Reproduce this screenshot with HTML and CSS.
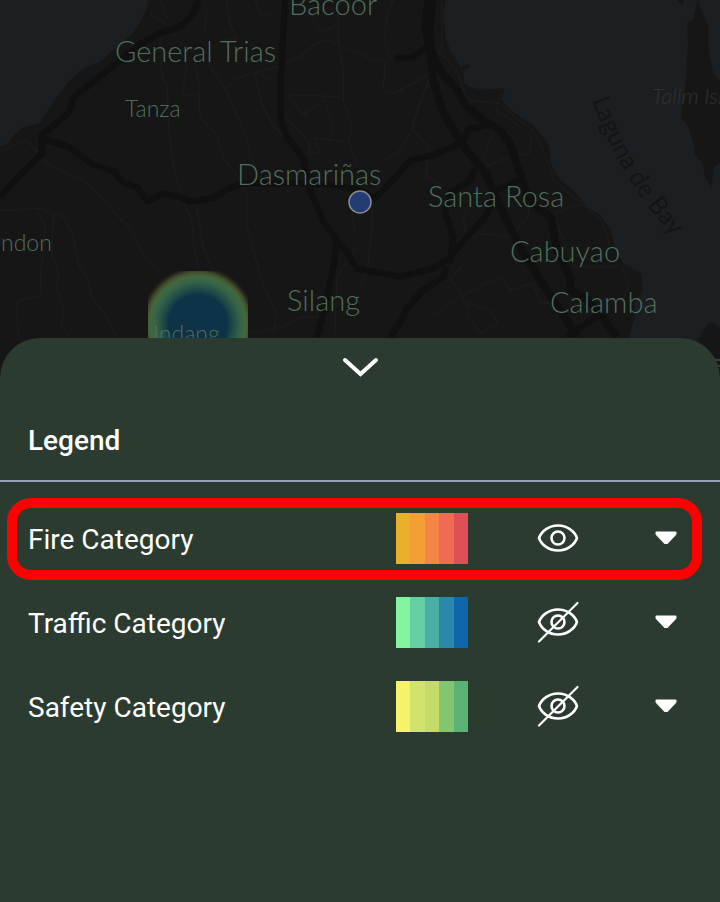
FILE: index.html
```html
<!DOCTYPE html>
<html lang="en">
<head>
<meta charset="utf-8">
<meta name="viewport" content="width=device-width, initial-scale=1">
<title>Map legend</title>
<link rel="stylesheet" href="styles.css">
</head>
<body>
<main class="screen">
  <svg class="map" viewBox="0 0 720 378" preserveAspectRatio="xMidYMin slice" role="img" aria-label="Map of Cavite and Laguna">
    <defs>
      <radialGradient id="heat" gradientUnits="userSpaceOnUse" cx="198" cy="324" r="58">
        <stop offset="0" stop-color="#0e3246"/>
        <stop offset=".5" stop-color="#0e3246"/>
        <stop offset=".6" stop-color="#1f4a49"/>
        <stop offset=".74" stop-color="#376446"/>
        <stop offset=".83" stop-color="#41683f"/>
        <stop offset=".9" stop-color="#4a5530" stop-opacity=".85"/>
        <stop offset="1" stop-color="#332a1a" stop-opacity="0"/>
      </radialGradient>
    </defs>
    <g transform="scale(.333333)">
      <path class="water" d="M0 0H444L438 30 418 72 402 96 370 124 330 158 300 185 258 200 240 214 205 245 180 278 150 322 115 372 68 382 45 402 25 430 0 442Z"/>
      <path class="water" d="M1338 0 1330 40 1336 110 1350 150 1375 190 1390 215 1393 250 1420 264 1450 270 1515 264 1503 296 1530 330 1575 360 1600 375 1630 412 1648 440 1652 490 1680 540 1720 570 1760 620 1800 645 1832 690 1848 750 1868 790 1924 820 1928 870 1905 910 1902 960 1888 1010 1890 1134H2160V0Z"/>
      <path class="land" d="M2092 0 2080 60 2062 66 2064 130 2058 240 2050 300 2042 355 2065 380 2080 430 2086 465 2108 490 2115 530 2134 562 2142 500 2160 490V245L2140 220 2127 160 2125 80 2104 30Z"/>
      <path class="land" d="M2090 1030 2120 975 2140 968 2160 985V1134H2090ZM1384 200 1408 193 1412 200 1390 212ZM2032 0H2050L2048 18Z"/>
    </g>
    <g class="minor" transform="scale(.333333)">
      <path d="M484 110V215L503 270 505 380 520 490 545 590 575 660 582 740 598 820M585 190 597 260 600 350 650 405 672 475 715 535 742 590 740 670 760 750 785 840 830 945 820 1010M624 190 665 250 710 345 745 430 750 475 775 500M0 455 80 420 110 455 145 495 250 540 300 590 405 705 430 770 480 820M560 190 548 285H600M0 632 120 625 190 650 220 710 238 800 262 830 275 890 320 950 350 1010M110 625 135 680 120 850 125 885 50 905 55 1010M160 640 155 760 175 820 170 865 190 930 185 980 210 1010M590 620 610 740 640 820"/>
      <path d="M676 265 710 235 780 214 850 195 900 170 945 130 980 120 1080 158M676 265 720 360M765 220 785 310 815 370 850 410M780 214 800 240 840 240M680 0 690 70 710 120 670 115M765 0 780 45 830 42M930 50 965 95 1010 75M1015 0V130L1030 210V300L1058 380 1045 420 1075 500M860 285 1020 290M865 290 910 345 960 310M850 340 930 430 925 460 960 460 945 415 1040 425M970 295 1000 380 985 435M450 40 510 80 530 120 575 150M480 0 505 60M620 30 615 90"/>
      <path d="M1180 0 1160 50 1155 120 1170 180M1080 155 1110 180 1170 183M1155 190 1150 270 1185 280 1230 255 1285 225M1325 0 1325 160 1375 220 1400 300 1500 310 1555 360 1600 390 1645 490 1660 540 1720 590 1805 660 1830 740M1320 150 1290 230 1260 310 1235 385 1285 440 1280 530 1330 560M1235 395 1190 460 1150 480M1595 390 1590 460 1500 480 1440 510M1480 390 1450 480 1470 500M1590 580 1585 650 1530 710 1440 700 1400 720 1390 650 1430 560M1660 640 1750 610M1660 640 1720 800 1850 800M1115 600V700L1100 820 1080 860M1385 800 1350 840 1380 870 1400 930M1290 950 1400 880 1500 830 1530 870 1600 850 1620 910 1690 910M1405 910 1470 930 1495 970 1440 1000 1405 950ZM1865 800 1885 850 1870 900 1800 900M750 1000 850 980 900 950 990 950M1070 740 1010 830 1005 1010M1055 610 1065 700M1500 280 1490 330 1560 380"/>
    </g>
    <g class="major" transform="scale(.333333)">
      <path d="M595 0 580 42 550 72 520 88 480 98 420 135 350 190 280 245 222 290 205 340 125 405 128 460 60 525 0 590M125 415 205 440 280 495 340 512 370 548 410 560 442 605 490 580 540 592 570 604 640 595 680 568 725 550 900 550 1000 555 1080 570"/>
      <path d="M855 0 842 250V360L860 410 910 475 930 570 970 665 1010 720 1040 755 1065 800M1010 720 1002 790 970 940 950 1010M1080 570 1125 595 1180 540 1230 482 1300 465 1385 430 1405 388 1465 375"/>
      <path class="wide" d="M1298 0 1290 80 1292 150 1330 225 1365 260 1400 320 1450 360 1500 390 1530 430 1560 520 1580 580 1610 620 1655 655 1670 750 1712 835V870L1770 905 1850 1010M1285 0 1275 80 1290 150 1300 240 1330 340 1385 430 1460 525 1500 620 1560 740 1620 840 1700 960 1730 1010"/>
      <path d="M1185 173H1235L1290 135M1065 805 1200 830 1300 805 1340 780 1460 645 1490 570 1560 540M1340 800 1330 830 1270 870 1220 925 1205 960 1170 1010M1350 790 1360 710 1335 640 1350 580 1410 540 1425 505M1700 1010 1790 950"/>
    </g>
    <rect x="148" y="271" width="100" height="107" fill="url(#heat)"/>
    <circle class="pin" cx="360" cy="202" r="11"/>
    <g class="label">
      <text class="city" x="289" y="15">Bacoor</text>
      <text class="city" x="115" y="62">General Trias</text>
      <text class="town" x="125" y="117">Tanza</text>
      <text class="city" x="237" y="185">Dasmariñas</text>
      <text class="city" x="428" y="207">Santa Rosa</text>
      <text class="city" x="510" y="262">Cabuyao</text>
      <text class="city" x="550" y="313">Calamba</text>
      <text class="city" x="287" y="311">Silang</text>
      <text class="town" x="1" y="251">ndon</text>
      <text class="town" x="153" y="342">Indang</text>
      <text class="island" x="652" y="104">Talim Island</text>
      <path id="bay" fill="none" d="M592 100Q620 182 682 246"/>
      <text class="bay"><textPath href="#bay">Laguna de Bay</textPath></text>
    </g>
    <path class="mark" d="M714 360h6M716 366h4"/>
  </svg>

  <section class="sheet" aria-labelledby="legend-title">
    <button class="collapse" type="button" aria-label="Collapse legend">
      <svg width="36" height="20" viewBox="0 0 36 20" aria-hidden="true"><path class="chevron" d="M3 3 18.500 17 34 3"/></svg>
    </button>
    <h1 class="title" id="legend-title">Legend</h1>
    <ul class="rows">
      <li class="row selected">
        <span class="name">Fire Category</span>
        <span class="scale fire"><i></i><i></i><i></i><i></i><i></i></span>
        <button class="icon" type="button" aria-label="Hide fire category">
          <svg width="42" height="42" viewBox="0 0 42 42" aria-hidden="true"><path class="eye" d="M2 21C4.500 14 12 8.500 21 8.500S37.500 14 40 21C37.500 28 30 33.500 21 33.500S4.500 28 2 21Z"/><circle class="eye" cx="21" cy="21" r="6.500"/></svg>
        </button>
        <button class="icon" type="button" aria-label="Expand fire category">
          <svg width="22" height="14" viewBox="0 0 22 14" aria-hidden="true"><path class="caret" d="M1.500 1.500h19v1.500L12 12h-2L1.500 3Z"/></svg>
        </button>
      </li>
      <li class="row">
        <span class="name">Traffic Category</span>
        <span class="scale traffic"><i></i><i></i><i></i><i></i><i></i></span>
        <button class="icon" type="button" aria-label="Show traffic category">
          <svg width="42" height="42" viewBox="0 0 42 42" aria-hidden="true"><path class="eye" d="M2 21C4.500 14 12 8.500 21 8.500S37.500 14 40 21C37.500 28 30 33.500 21 33.500S4.500 28 2 21Z"/><circle class="eye" cx="21" cy="21" r="6.500"/><path class="eye slash" d="M2 40.500 40.500 2"/></svg>
        </button>
        <button class="icon" type="button" aria-label="Expand traffic category">
          <svg width="22" height="14" viewBox="0 0 22 14" aria-hidden="true"><path class="caret" d="M1.500 1.500h19v1.500L12 12h-2L1.500 3Z"/></svg>
        </button>
      </li>
      <li class="row">
        <span class="name">Safety Category</span>
        <span class="scale safety"><i></i><i></i><i></i><i></i><i></i></span>
        <button class="icon" type="button" aria-label="Show safety category">
          <svg width="42" height="42" viewBox="0 0 42 42" aria-hidden="true"><path class="eye" d="M2 21C4.500 14 12 8.500 21 8.500S37.500 14 40 21C37.500 28 30 33.500 21 33.500S4.500 28 2 21Z"/><circle class="eye" cx="21" cy="21" r="6.500"/><path class="eye slash" d="M2 40.500 40.500 2"/></svg>
        </button>
        <button class="icon" type="button" aria-label="Expand safety category">
          <svg width="22" height="14" viewBox="0 0 22 14" aria-hidden="true"><path class="caret" d="M1.500 1.500h19v1.500L12 12h-2L1.500 3Z"/></svg>
        </button>
      </li>
    </ul>
  </section>
</main>
</body>
</html>
```
FILE: styles.css
```css
* { box-sizing: border-box; }
body {
  margin: 0;
  background: #161616;
  color: #fff;
  font-family: Roboto, "Liberation Sans", sans-serif;
}
.screen {
  display: flex;
  flex-direction: column;
  min-height: 100vh;
}
.map {
  display: block;
  width: 100%;
  height: 378px;
  flex: none;
}
.water { fill: #1b1f22; }
.land { fill: #161616; }
.minor { fill: none; stroke: #1b1b1b; stroke-width: 5; stroke-linejoin: round; }
.major { fill: none; stroke: #101010; stroke-width: 19; stroke-linejoin: round; }
.major .wide { stroke-width: 23; }
.pin { fill: #213d72; stroke: #8b8b8d; stroke-width: 1.5; }
.label {
  font-family: Lato, "Open Sans", sans-serif;
  fill: #48604f;
}
.city { font-size: 29px; font-weight: 300; fill: #4e6f5d; }
.town { font-size: 23px; font-weight: 300; fill: #4e6f5d; }
.island { font-size: 22px; font-style: italic; font-weight: 300; fill: #303233; }
.bay { font-size: 25px; fill: #121416; }
.mark { stroke: #52685b; stroke-width: 1; }

.sheet {
  position: relative;
  flex: 1;
  margin-top: -40px;
  border-radius: 40px 40px 0 0;
  background: #2b3b30;
}
.collapse {
  display: flex;
  justify-content: center;
  align-items: center;
  width: 100%;
  height: 58px;
  padding: 0;
  border: 0;
  background: none;
}
.chevron { fill: none; stroke: #fff; stroke-width: 4; stroke-linecap: round; }
.title {
  margin: 0;
  padding: 26px 28px 20px;
  border-bottom: 2px solid #949fba;
  font-size: 28px;
  font-weight: 500;
  line-height: 38px;
}
.rows {
  margin: 0;
  padding: 14px 0;
  list-style: none;
}
.row {
  position: relative;
  display: grid;
  grid-template-columns: 1fr 72px 180px 36px;
  align-items: center;
  height: 84px;
  padding: 0 36px 0 28px;
}
.selected::after {
  content: "";
  position: absolute;
  inset: 2px 18px 0 7px;
  border: 10px solid #f00;
  border-radius: 24px;
  pointer-events: none;
}
.name { padding-top: 4px; font-size: 28px; line-height: 36px; }
.scale { display: flex; height: 51px; }
.scale i { flex: 1; }
.fire i:nth-child(1) { background: #ebb02b; }
.fire i:nth-child(2) { background: #f39f38; }
.fire i:nth-child(3) { background: #f28644; }
.fire i:nth-child(4) { background: #ef6b51; }
.fire i:nth-child(5) { background: #df5056; }
.traffic i:nth-child(1) { background: #82f3a1; }
.traffic i:nth-child(2) { background: #64cfa5; }
.traffic i:nth-child(3) { background: #49afa5; }
.traffic i:nth-child(4) { background: #2a89a9; }
.traffic i:nth-child(5) { background: #0f67aa; }
.safety i:nth-child(1) { background: #f6f36a; }
.safety i:nth-child(2) { background: #d1e36c; }
.safety i:nth-child(3) { background: #c4db6c; }
.safety i:nth-child(4) { background: #86c570; }
.safety i:nth-child(5) { background: #5cb174; }
.icon {
  display: flex;
  justify-content: center;
  align-items: center;
  height: 48px;
  padding: 0;
  border: 0;
  background: none;
}
.eye { fill: none; stroke: #fff; stroke-width: 2.6; stroke-linecap: round; stroke-linejoin: round; }
.slash { stroke-width: 2.2; }
.caret { fill: #fff; stroke: #fff; stroke-width: 2; stroke-linejoin: round; }
```
